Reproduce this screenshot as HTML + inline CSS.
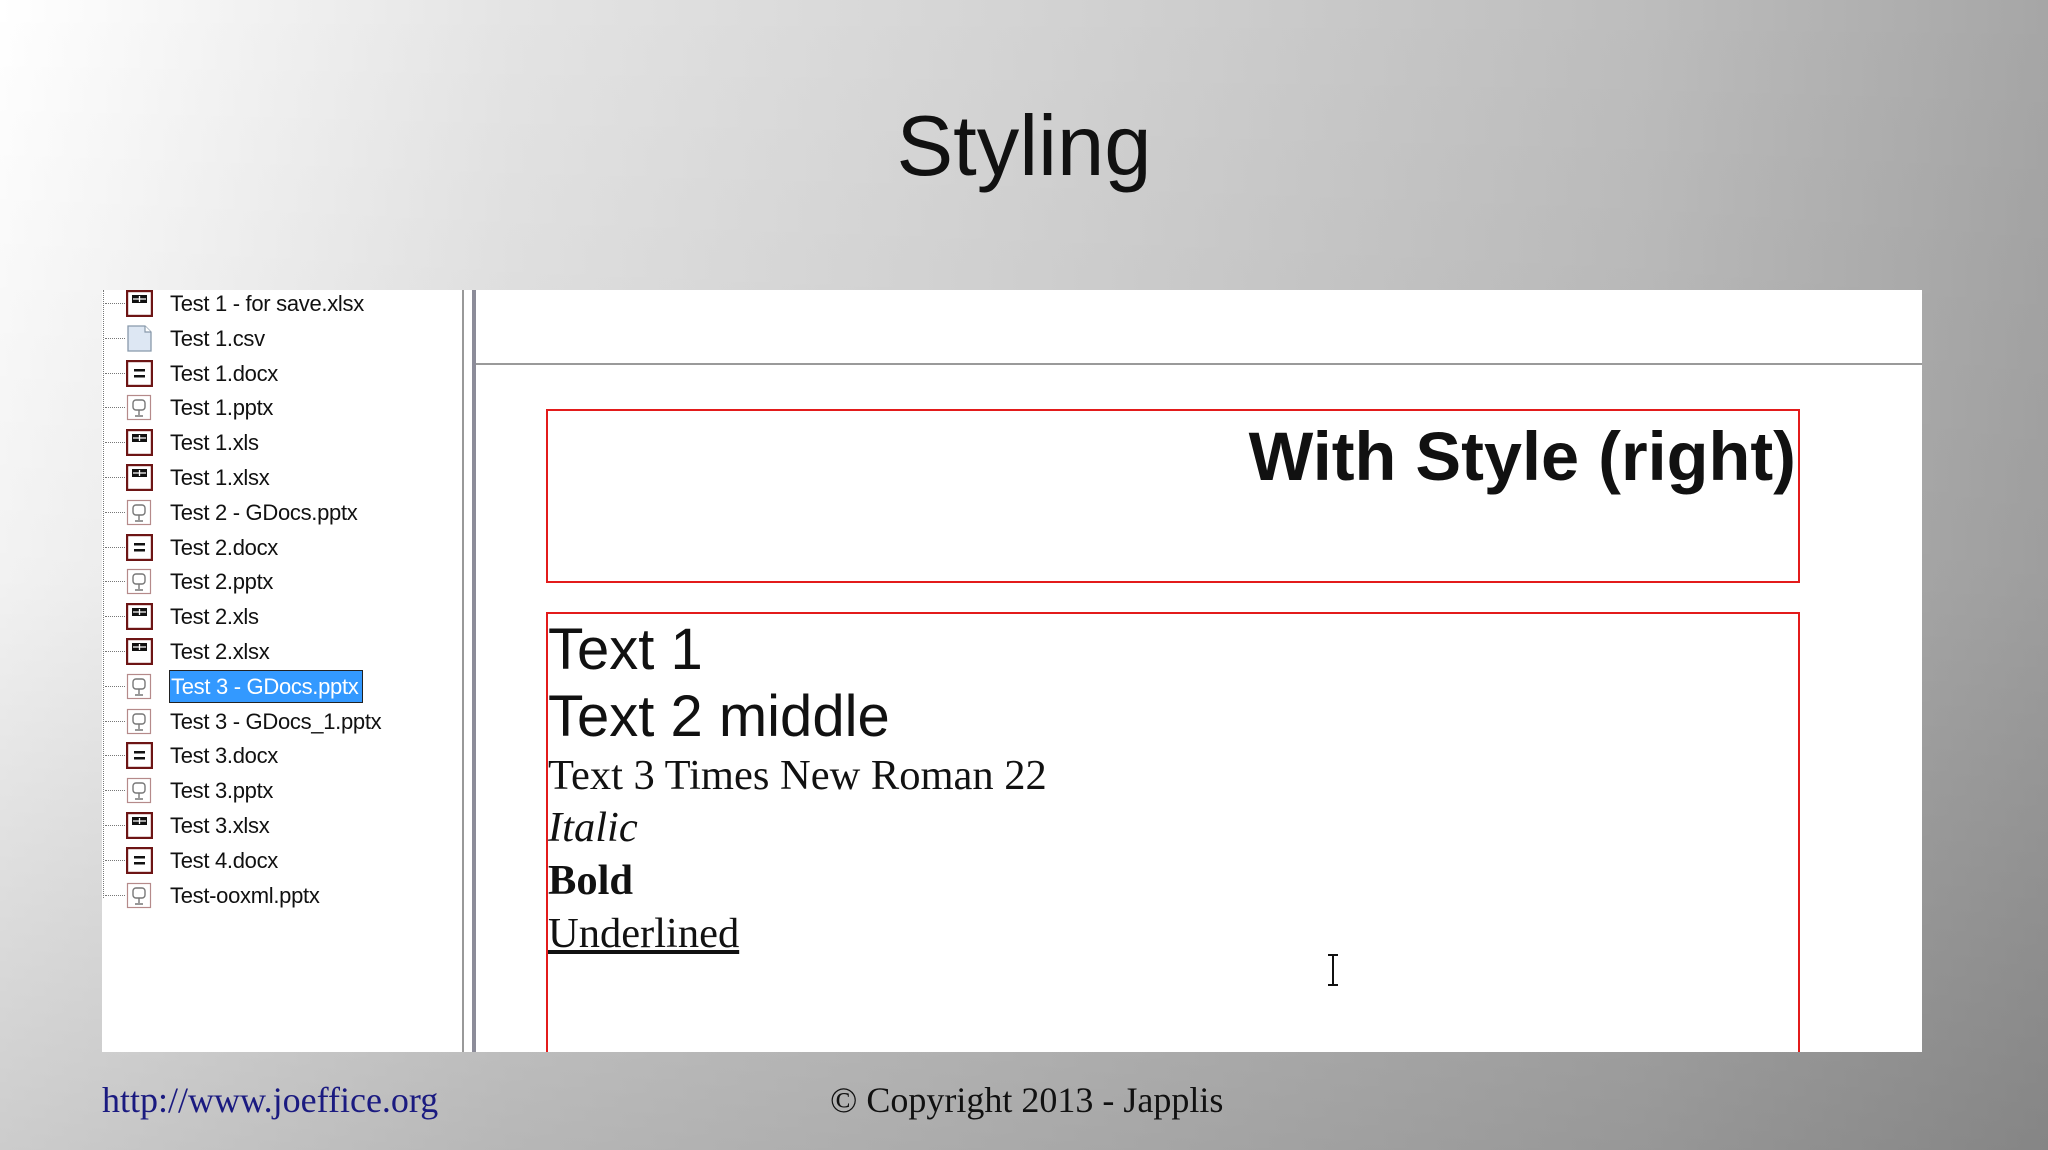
<!DOCTYPE html>
<html><head><meta charset="utf-8"><style>
*{margin:0;padding:0;box-sizing:border-box}
body{width:2048px;height:1150px;overflow:hidden;position:relative;font-family:"Liberation Sans",sans-serif;
background:linear-gradient(to bottom,rgba(0,0,0,0) 0%,rgba(0,0,0,0.05) 50%,rgba(0,0,0,0.2) 100%),linear-gradient(to right,#fff 0%,#e4e4e4 25%,#d0d0d0 55%,#bdbdbd 80%,#a6a6a6 100%);}
.abs{position:absolute;white-space:nowrap}
#panel{position:absolute;left:102px;top:290px;width:1820px;height:762px;background:#fff;overflow:hidden}
.row{position:absolute;left:0;height:35px;width:358px}
.row .ic{position:absolute;left:24px;top:4px}
.row .t{position:absolute;left:68px;top:0;line-height:35px;font-size:22px;color:#111;letter-spacing:-0.3px;white-space:nowrap}
.row .dot{position:absolute;left:3px;top:17px;width:20px;border-top:1px dotted #777}
.row .t.sel{background:#3399ff;color:#fff;outline:1px solid #222;padding:0 4px 0 1px;line-height:31px;top:2px}
.s{font-family:"Liberation Serif",serif;font-size:42.5px;line-height:43px;left:548px;color:#111}
</style></head><body>
<div class="abs" style="left:0;width:2048px;text-align:center;top:104px;font-size:85px;line-height:85px;color:#111">Styling</div>

<div id="panel">
 <div style="position:absolute;left:1px;top:0;height:608px;border-left:1px dotted #777"></div>
 <div style="position:absolute;left:360px;top:0;width:2px;height:762px;background:#999"></div>
 <div style="position:absolute;left:370px;top:0;width:4px;height:762px;background:#8c8c99"></div>
 <div style="position:absolute;left:374px;top:73px;width:1446px;height:2px;background:#9a9a9a"></div>
 <div id="tree"></div>
 <div style="position:absolute;left:444px;top:119px;width:1254px;height:174px;border:2px solid #e31b1b"></div>
 <div style="position:absolute;left:444px;top:322px;width:1254px;height:500px;border:2px solid #e31b1b"></div>
</div>

<div class="abs" style="right:252px;top:423px;font-size:68.5px;line-height:68px;font-weight:bold;color:#111">With Style (right)</div>
<div class="abs" style="left:548px;top:621px;font-size:58px;line-height:58px;color:#111">Text 1</div>
<div class="abs" style="left:548px;top:688px;font-size:58px;line-height:58px;color:#111">Text 2 middle</div>
<div class="abs s" style="top:754px">Text 3 Times New Roman 22</div>
<div class="abs s" style="top:806px;font-style:italic">Italic</div>
<div class="abs s" style="top:859px;font-weight:bold">Bold</div>
<div class="abs s" style="top:912px;text-decoration:underline">Underlined</div>

<svg class="abs" style="left:1326px;top:954px" width="14" height="32" viewBox="0 0 14 32"><path d="M2 1h10M7 1v30M2 31h10" stroke="#111" stroke-width="2" fill="none"/></svg>

<div class="abs" style="left:102px;top:1082px;font-family:'Liberation Serif',serif;font-size:36px;line-height:36px;color:#1a1a80">http://www.joeffice.org</div>
<div class="abs" style="left:830px;top:1082px;font-family:'Liberation Serif',serif;font-size:36px;line-height:36px;color:#111">© Copyright 2013 - Japplis</div>

<script>
var xl='<svg class="ic" width="27" height="27" viewBox="0 0 27 27"><rect x="1" y="1" width="25" height="25" fill="#fff" stroke="#6d1515" stroke-width="2.4"/><rect x="6" y="5" width="15" height="8" fill="#111"/><path d="M7 9h13M13.5 6v6" stroke="#fff" stroke-width="1.3"/></svg>';
var dc='<svg class="ic" width="27" height="27" viewBox="0 0 27 27"><rect x="1" y="1" width="25" height="25" fill="#fff" stroke="#6d1515" stroke-width="2.4"/><rect x="8" y="9" width="11" height="2.5" fill="#111"/><rect x="8" y="15" width="11" height="2.5" fill="#111"/></svg>';
var pp='<svg class="ic" width="27" height="27" viewBox="0 0 27 27"><rect x="1.5" y="1.5" width="23" height="24" fill="#fff" stroke="#b58a8a" stroke-width="1.2"/><rect x="7" y="6" width="12" height="10" rx="3" fill="none" stroke="#777" stroke-width="1.4"/><path d="M13 16v5M9 22h8" stroke="#777" stroke-width="1.4"/></svg>';
var cs='<svg class="ic" width="27" height="27" viewBox="0 0 27 27"><path d="M2 1h17l6 6v19H2z" fill="#dde7f3" stroke="#8899aa" stroke-width="1.3"/><path d="M19 1v6h6" fill="#fff" stroke="#8899aa" stroke-width="1.2"/></svg>';
var items=[[xl,"Test 1 - for save.xlsx"],[cs,"Test 1.csv"],[dc,"Test 1.docx"],[pp,"Test 1.pptx"],[xl,"Test 1.xls"],[xl,"Test 1.xlsx"],[pp,"Test 2 - GDocs.pptx"],[dc,"Test 2.docx"],[pp,"Test 2.pptx"],[xl,"Test 2.xls"],[xl,"Test 2.xlsx"],[pp,"Test 3 - GDocs.pptx",1],[pp,"Test 3 - GDocs_1.pptx"],[dc,"Test 3.docx"],[pp,"Test 3.pptx"],[xl,"Test 3.xlsx"],[dc,"Test 4.docx"],[pp,"Test-ooxml.pptx"]];
var h='';
for(var i=0;i<items.length;i++){var yy=-4+i*34.8;
h+='<div class="row" style="top:'+yy+'px"><div class="dot"></div>'+items[i][0]+'<div class="t'+(items[i][2]?' sel':'')+'">'+items[i][1]+'</div></div>';}
document.getElementById('tree').innerHTML=h;
</script>
</body></html>
